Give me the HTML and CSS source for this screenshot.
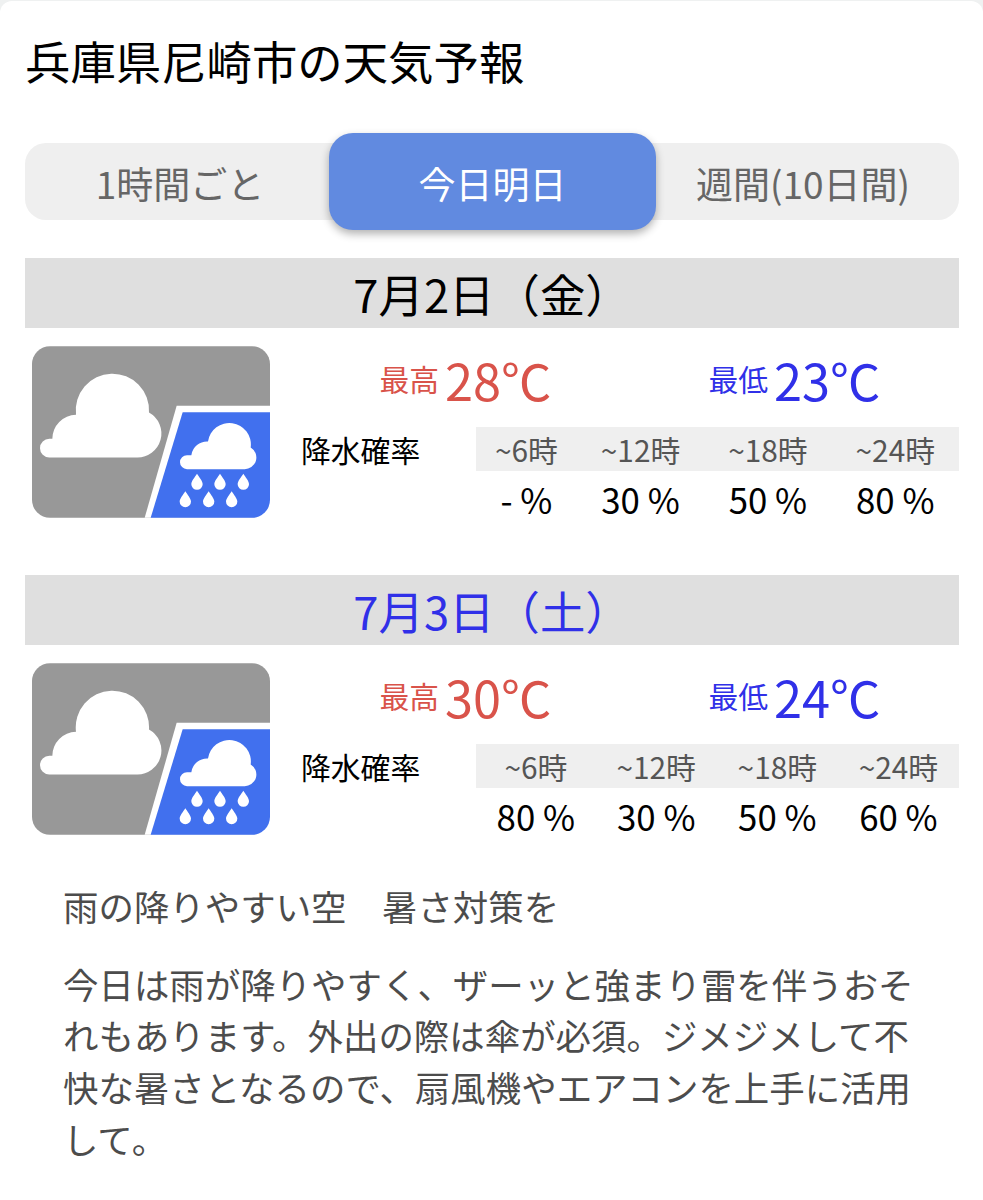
FILE: index.html
```html
<!DOCTYPE html>
<html lang="ja">
<head>
    <meta charset="UTF-8">
    <meta name="viewport" content="width=device-width, initial-scale=1.0">
    <title>兵庫県尼崎市の天気予報</title>
    <link rel="stylesheet" href="styles.css">
</head>
<body>
    <!-- くもり時々雨アイコン -->
    <svg class="symbols" width="0" height="0">
        <symbol id="cloudy-rain" viewBox="0 0 714 515">
            <rect width="714" height="515" rx="54" fill="#989898"/>
            <path fill="#fff" d="M434 179H714V515H338Z"/>
            <path fill="#4170ee" d="M452 198H714V461A54 54 0 0 1 660 515H356Z"/>
            <path fill="#fff" d="M52 334A28 28 0 0 1 52 278H61A72 72 0 0 1 132 206A110 110 0 1 1 351 199A72 72 0 0 1 314 334Z"/>
            <path fill="#fff" d="M465 369A21 21 0 0 1 465 327H478A48 48 0 0 1 528 286A64.5 64.5 0 1 1 656 304A35 35 0 0 1 636 369Z"/>
            <g fill="#fff">
                <path id="drop" d="M495 383C501 393 512 405 512 414A17 17 0 0 1 478 414C478 405 489 393 495 383Z"/>
                <use href="#drop" x="69"/>
                <use href="#drop" x="139"/>
                <use href="#drop" x="-35" y="52"/>
                <use href="#drop" x="35" y="52"/>
                <use href="#drop" x="104" y="52"/>
            </g>
        </symbol>
    </svg>

    <main class="card">
        <h1>兵庫県尼崎市の天気予報</h1>

        <nav class="tabs">
            <a class="tab">1時間ごと</a>
            <a class="tab active">今日明日</a>
            <a class="tab">週間(10日間)</a>
        </nav>

        <section class="day">
            <h2>7月2日（金）</h2>
            <div class="forecast">
                <svg class="weather-icon"><use href="#cloudy-rain"/></svg>
                <div class="detail">
                    <div class="temps">
                        <p class="temp high">最高<span>28℃</span></p>
                        <p class="temp low">最低<span>23℃</span></p>
                    </div>
                    <div class="rain">
                        <p class="rain-label">降水確率</p>
                        <table>
                            <tr><th>~6時</th><th>~12時</th><th>~18時</th><th>~24時</th></tr>
                            <tr><td>- %</td><td>30 %</td><td>50 %</td><td>80 %</td></tr>
                        </table>
                    </div>
                </div>
            </div>
        </section>

        <section class="day saturday">
            <h2>7月3日（土）</h2>
            <div class="forecast">
                <svg class="weather-icon"><use href="#cloudy-rain"/></svg>
                <div class="detail">
                    <div class="temps">
                        <p class="temp high">最高<span>30℃</span></p>
                        <p class="temp low">最低<span>24℃</span></p>
                    </div>
                    <div class="rain">
                        <p class="rain-label">降水確率</p>
                        <table>
                            <tr><th>~6時</th><th>~12時</th><th>~18時</th><th>~24時</th></tr>
                            <tr><td>80 %</td><td>30 %</td><td>50 %</td><td>60 %</td></tr>
                        </table>
                    </div>
                </div>
            </div>
        </section>

        <section class="comment">
            <p>雨の降りやすい空　暑さ対策を</p>
            <p>今日は雨が降りやすく、ザーッと強まり雷を伴うおそれもあります。外出の際は傘が必須。ジメジメして不快な暑さとなるので、扇風機やエアコンを上手に活用して。</p>
        </section>
    </main>
</body>
</html>
```

FILE: styles.css
```css
* {
    box-sizing: border-box;
}

body {
    margin: 0;
    padding-top: 1px;
    background-color: #eff1f1;
    font-family: "Noto Sans CJK JP", sans-serif;
    color: #000;
}

h1, h2, p {
    margin: 0;
    font-weight: normal;
}

.symbols {
    display: block;
}

.card {
    height: 1199px;
    padding: 26px 24px 0 25px;
    background-color: #fff;
    border-radius: 12px 12px 0 0;
    overflow: hidden;
}

h1 {
    font-size: 45.4px;
    line-height: 66px;
}

/* タブ */
.tabs {
    display: flex;
    align-items: center;
    height: 77px;
    margin-top: 50px;
    background-color: #efefef;
    border-radius: 21px;
}

.tab {
    flex: 0 0 304px;
    padding: 3px 0 0 6px;
    font-size: 37px;
    line-height: 77px;
    text-align: center;
    color: #666;
}

.tab:last-child {
    flex: 1;
    padding: 3px 9px 0 0;
}

.tab.active {
    flex: 0 0 327px;
    padding-left: 0;
    line-height: 94px;
    color: #fff;
    background-color: #618ae0;
    border-radius: 24px;
    box-shadow: 0 4px 9px rgba(0, 0, 0, 0.3);
}

/* 日ごとの予報 */
.day {
    height: 317px;
}

.tabs + .day {
    margin-top: 38px;
}

h2 {
    height: 70px;
    font-size: 45.4px;
    line-height: 71px;
    text-align: center;
    background-color: #dfdfdf;
}

.saturday h2 {
    color: #3030e8;
}

.forecast {
    display: flex;
    padding: 18px 0 0 7px;
}

.weather-icon {
    width: 238px;
    height: 172px;
    margin-right: 31px;
}

.detail {
    flex: 1;
}

.temps {
    display: flex;
    height: 81px;
}

.temp {
    display: flex;
    flex: 1;
    justify-content: center;
    font-size: 29.8px;
    line-height: 64px;
}

.temp span {
    margin-left: 6px;
    font-size: 50.5px;
    line-height: 66px;
}

.high {
    color: #d9534a;
}

.low {
    color: #3030e8;
}

.rain {
    display: flex;
    justify-content: space-between;
}

.rain-label {
    font-size: 29.8px;
    line-height: 45px;
}

table {
    width: 483px;
    border-collapse: collapse;
}

th, td {
    padding: 0;
    font-weight: normal;
    text-align: center;
}

th {
    font-size: 29.8px;
    line-height: 44px;
    color: #555;
    background-color: #efefef;
}

td {
    font-size: 34.8px;
    line-height: 57px;
}

/* コメント */
.comment {
    padding: 0 34px 0 38px;
    font-size: 35.45px;
    line-height: 51.7px;
    color: #4c4c4c;
}

.tabs ~ .comment {
    margin-top: -12px;
}

.comment p + p {
    margin-top: 26px;
}
```
